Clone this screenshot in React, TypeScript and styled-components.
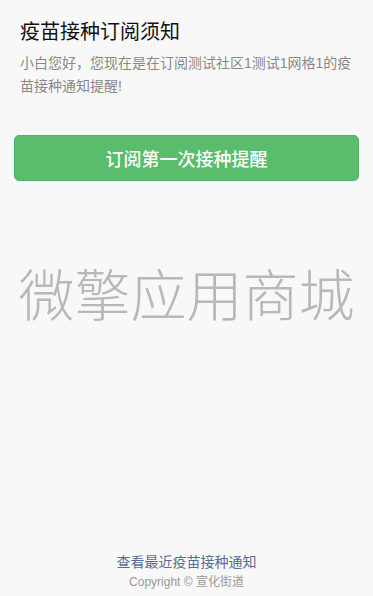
import * as React from 'react';
import styled, { createGlobalStyle } from 'styled-components';

const GlobalStyle = createGlobalStyle`
	html, body {
		margin: 0;
		padding: 0;
		background: #f8f8f8;
	}
	body {
		font-family: 'Liberation Sans', 'Noto Sans CJK SC', sans-serif;
	}
`;

const App = () => {
	return (
		<Page>
			<GlobalStyle />
			<Notice>
				<Title>疫苗接种订阅须知</Title>
				<Desc>小白您好，您现在是在订阅测试社区1测试1网格1的疫苗接种通知提醒!</Desc>
			</Notice>
			<SubscribeButton>订阅第一次接种提醒</SubscribeButton>
			<Brand>微擎应用商城</Brand>
			<Footer>
				<FooterLink>查看最近疫苗接种通知</FooterLink>
				<Copyright>Copyright © 宣化街道</Copyright>
			</Footer>
		</Page>
	);
};

export default App;

const Page = styled.div`
	min-height: 100vh;
	box-sizing: border-box;
	display: flex;
	flex-direction: column;
	padding: 18px 14px 4px;
`;

const Notice = styled.div`
	padding: 0 6px;
`;

const Title = styled.h2`
	margin: 0;
	font-size: 20px;
	font-weight: 400;
	line-height: 28px;
	color: #111;
`;

const Desc = styled.p`
	margin: 6px 0 0;
	font-size: 14px;
	line-height: 23px;
	color: #888;
`;

const SubscribeButton = styled.button`
	margin-top: 37px;
	height: 46px;
	width: 100%;
	border: 1px solid #4fb463;
	border-radius: 5px;
	background: #59bd6c;
	color: #fff;
	font-family: inherit;
	font-size: 18px;
	font-weight: 500;
	cursor: pointer;
`;

const Brand = styled.div`
	margin-top: 88px;
	text-align: center;
	font-size: 56px;
	font-weight: 300;
	line-height: 56px;
	color: #b8b8b8;
`;

const Footer = styled.div`
	margin-top: auto;
	display: flex;
	flex-direction: column;
	align-items: center;
`;

const FooterLink = styled.a`
	font-size: 14px;
	line-height: 20px;
	color: #576b95;
	cursor: pointer;
`;

const Copyright = styled.div`
	font-size: 12px;
	line-height: 20px;
	color: #999;
`;
